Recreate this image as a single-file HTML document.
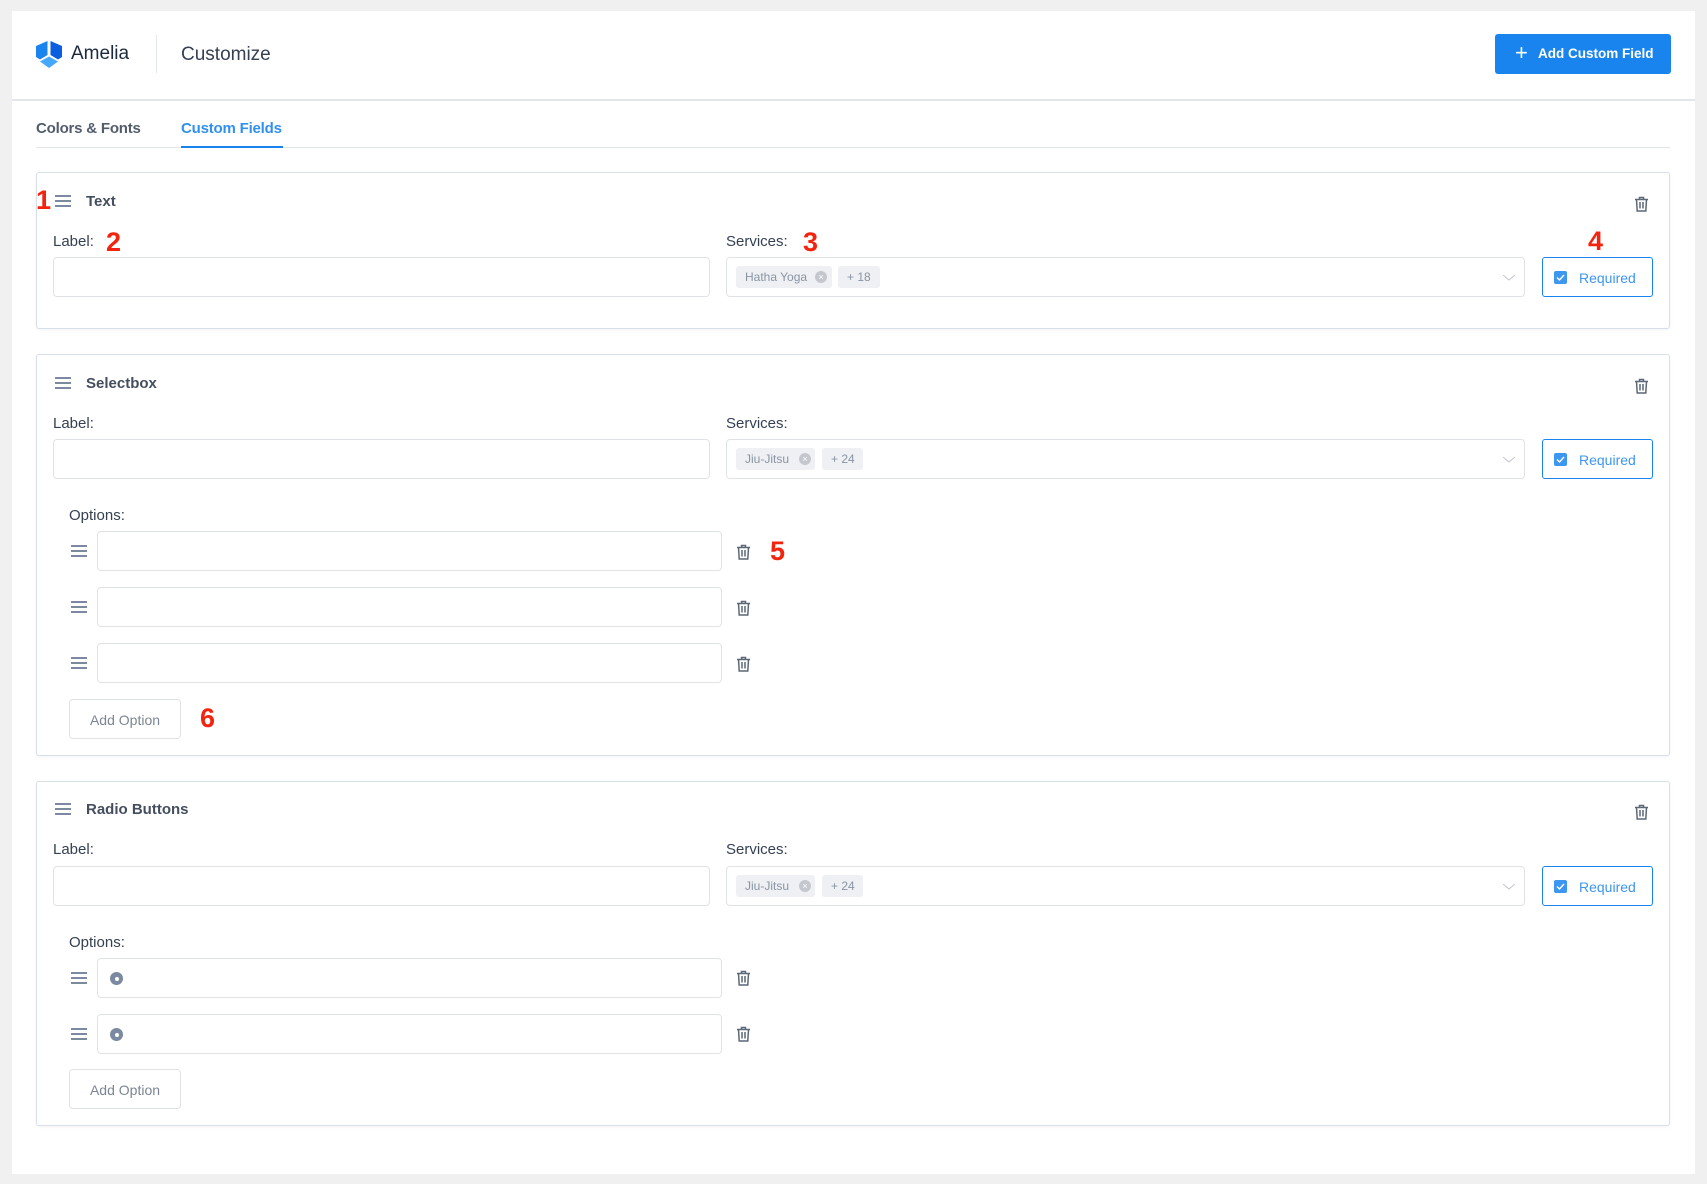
<!DOCTYPE html>
<html><head><meta charset="utf-8"><style>
*{box-sizing:border-box;margin:0;padding:0}
body{width:1707px;height:1184px;background:#f0f0f0;font-family:"Liberation Sans",Arial,sans-serif;position:relative;overflow:hidden;color:#354052}
.a{position:absolute}
.panel{left:12px;top:11px;width:1683px;height:1163px;background:#fff}
.hline{left:12px;top:99px;width:1683px;height:2px;background:#e2e6ea}
.card{position:absolute;left:36px;width:1634px;border:1px solid #d7dfe8;border-radius:3px;background:#fff;box-shadow:0 1px 3px rgba(0,0,0,.05)}
.inp{position:absolute;border:1px solid #dfe3e8;border-radius:4px;background:#fff}
.lbl{position:absolute;font-size:15px;color:#354052}
.title{position:absolute;font-size:15px;font-weight:bold;color:#354052;opacity:.92}
.req{position:absolute;left:1542px;width:111px;height:40px;border:1px solid #1a84ee;border-radius:3px;color:#3d96ef;font-size:14px}
.req .cb{position:absolute;left:11px;top:13px;width:13px;height:13px;background:#3d96ef;border-radius:2px}
.req span{position:absolute;left:36px;top:12px}
.tag{position:absolute;height:22px;background:#eef0f3;border-radius:3px;font-size:12px;color:#8a94a3;line-height:22px;padding-left:9px}
.x{position:absolute;top:5px;width:12px;height:12px;border-radius:50%;background:#c4c8ce;color:#fff;font-size:9px;line-height:12px;text-align:center}
.red{position:absolute;color:#f3240f;font-weight:bold;font-size:27px}
.addopt{position:absolute;left:69px;width:112px;height:40px;border:1px solid #dfe3e8;border-radius:4px;font-size:14px;color:#7b8594;text-align:center;line-height:40px}
.radio{position:absolute;left:12px;top:13px;width:13px;height:13px;border-radius:50%;background:#7b8aa0}
.radio:after{content:"";position:absolute;left:4.5px;top:4.5px;width:4px;height:4px;border-radius:50%;background:#fff}
</style></head><body>
<div class="a panel"></div>
<div class="a hline"></div>
<svg class="a" style="left:36px;top:41px" width="26" height="27" viewBox="0 0 26 27"><path d="M0 5 L11.5 0 L11.5 14 L4 18.5 L0 16Z" fill="#1a84ee"/><path d="M14.5 0 L26 5 L26 16 L22 18.5 L14.5 14Z" fill="#0a5fe0"/><path d="M13 15.5 L22 20.5 L13 27 L4 20.5Z" fill="#45a8ff"/></svg>
<div class="a" style="left:71px;top:43px;font-size:19px;color:#1b2a3d">Amelia</div>
<div class="a" style="left:156px;top:35px;width:1px;height:38px;background:#e2e6ea"></div>
<div class="a" style="left:181px;top:44px;font-size:19px;color:#354052">Customize</div>
<div class="a" style="left:1495px;top:34px;width:176px;height:40px;background:#1a84ee;border-radius:3px;color:#fff;font-size:14px;font-weight:bold;line-height:40px"><span style="position:absolute;left:20px;top:-1px;font-size:22px;font-weight:normal">+</span><span style="position:absolute;left:43px;font-size:13.5px">Add Custom Field</span></div>
<div class="a" style="left:36px;top:120px;font-size:15px;color:#354052;font-weight:bold;opacity:.85;letter-spacing:-.2px">Colors &amp; Fonts</div>
<div class="a" style="left:181px;top:120px;font-size:15px;color:#1a84ee;font-weight:bold;opacity:.9;letter-spacing:-.2px">Custom Fields</div>
<div class="a" style="left:36px;top:147px;width:1634px;height:1px;background:#e2e6ea"></div>
<div class="a" style="left:181px;top:146px;width:102px;height:2px;background:#1a84ee"></div>

<svg width="0" height="0" style="position:absolute"><defs>
<g id="ham"><rect x="0" y="0" width="16" height="2" fill="#7b8aa0"/><rect x="0" y="5" width="16" height="2" fill="#7b8aa0"/><rect x="0" y="10" width="16" height="2" fill="#7b8aa0"/></g>
<g id="tr" fill="none" stroke="#5c6778" stroke-width="1.5"><path d="M1 3.5H14M5.5 3.5V1.5H9.5V3.5M2.5 3.5L3.2 15H11.8L12.5 3.5M6 6V12.5M9 6V12.5"/></g>
<g id="chev"><path d="M0 0L6 5L12 0" fill="none" stroke="#c0c4cc" stroke-width="1"/></g>
<g id="chk"><path d="M3 6.5L5.5 9L10 4" fill="none" stroke="#fff" stroke-width="1.4"/></g>
</defs></svg>

<!-- card 1 -->
<div class="card" style="top:172px;height:157px"></div>
<svg class="a" style="left:55px;top:195px" width="16" height="12"><use href="#ham"/></svg>
<div class="title" style="left:86px;top:193px">Text</div>
<svg class="a" style="left:1634px;top:196px" width="15" height="16"><use href="#tr"/></svg>
<div class="lbl" style="left:53px;top:233px">Label:</div>
<div class="inp" style="left:53px;top:257px;width:657px;height:40px"></div>
<div class="lbl" style="left:726px;top:233px">Services:</div>
<div class="inp" style="left:726px;top:257px;width:799px;height:40px"></div>
<div class="tag" style="left:736px;top:266px;width:96px">Hatha Yoga<div class="x" style="left:79px">×</div></div>
<div class="tag" style="left:838px;top:266px;width:42px">+ 18</div>
<svg class="a" style="left:1503px;top:275px" width="12" height="6"><use href="#chev"/></svg>
<div class="req" style="top:257px"><div class="cb"><svg width="13" height="13"><use href="#chk"/></svg></div><span>Required</span></div>
<div class="red" style="left:36px;top:185px">1</div>
<div class="red" style="left:106px;top:227px">2</div>
<div class="red" style="left:803px;top:227px">3</div>
<div class="red" style="left:1588px;top:226px">4</div>

<!-- card 2 -->
<div class="card" style="top:354px;height:402px"></div>
<svg class="a" style="left:55px;top:377px" width="16" height="12"><use href="#ham"/></svg>
<div class="title" style="left:86px;top:375px">Selectbox</div>
<svg class="a" style="left:1634px;top:378px" width="15" height="16"><use href="#tr"/></svg>
<div class="lbl" style="left:53px;top:415px">Label:</div>
<div class="inp" style="left:53px;top:439px;width:657px;height:40px"></div>
<div class="lbl" style="left:726px;top:415px">Services:</div>
<div class="inp" style="left:726px;top:439px;width:799px;height:40px"></div>
<div class="tag" style="left:736px;top:448px;width:79px">Jiu-Jitsu<div class="x" style="left:63px">×</div></div>
<div class="tag" style="left:822px;top:448px;width:41px">+ 24</div>
<svg class="a" style="left:1503px;top:457px" width="12" height="6"><use href="#chev"/></svg>
<div class="req" style="top:439px"><div class="cb"><svg width="13" height="13"><use href="#chk"/></svg></div><span>Required</span></div>
<div class="lbl" style="left:69px;top:507px">Options:</div>
<svg class="a" style="left:71px;top:545px" width="16" height="12"><use href="#ham"/></svg>
<div class="inp" style="left:97px;top:531px;width:625px;height:40px"></div>
<svg class="a" style="left:736px;top:544px" width="15" height="16"><use href="#tr"/></svg>
<svg class="a" style="left:71px;top:601px" width="16" height="12"><use href="#ham"/></svg>
<div class="inp" style="left:97px;top:587px;width:625px;height:40px"></div>
<svg class="a" style="left:736px;top:600px" width="15" height="16"><use href="#tr"/></svg>
<svg class="a" style="left:71px;top:657px" width="16" height="12"><use href="#ham"/></svg>
<div class="inp" style="left:97px;top:643px;width:625px;height:40px"></div>
<svg class="a" style="left:736px;top:656px" width="15" height="16"><use href="#tr"/></svg>
<div class="addopt" style="top:699px">Add Option</div>
<div class="red" style="left:770px;top:536px">5</div>
<div class="red" style="left:200px;top:703px">6</div>

<!-- card 3 -->
<div class="card" style="top:781px;height:345px"></div>
<svg class="a" style="left:55px;top:803px" width="16" height="12"><use href="#ham"/></svg>
<div class="title" style="left:86px;top:801px">Radio Buttons</div>
<svg class="a" style="left:1634px;top:804px" width="15" height="16"><use href="#tr"/></svg>
<div class="lbl" style="left:53px;top:841px">Label:</div>
<div class="inp" style="left:53px;top:866px;width:657px;height:40px"></div>
<div class="lbl" style="left:726px;top:841px">Services:</div>
<div class="inp" style="left:726px;top:866px;width:799px;height:40px"></div>
<div class="tag" style="left:736px;top:875px;width:79px">Jiu-Jitsu<div class="x" style="left:63px">×</div></div>
<div class="tag" style="left:822px;top:875px;width:41px">+ 24</div>
<svg class="a" style="left:1503px;top:884px" width="12" height="6"><use href="#chev"/></svg>
<div class="req" style="top:866px"><div class="cb"><svg width="13" height="13"><use href="#chk"/></svg></div><span>Required</span></div>
<div class="lbl" style="left:69px;top:934px">Options:</div>
<svg class="a" style="left:71px;top:972px" width="16" height="12"><use href="#ham"/></svg>
<div class="inp" style="left:97px;top:958px;width:625px;height:40px"><div class="radio"></div></div>
<svg class="a" style="left:736px;top:970px" width="15" height="16"><use href="#tr"/></svg>
<svg class="a" style="left:71px;top:1028px" width="16" height="12"><use href="#ham"/></svg>
<div class="inp" style="left:97px;top:1014px;width:625px;height:40px"><div class="radio"></div></div>
<svg class="a" style="left:736px;top:1026px" width="15" height="16"><use href="#tr"/></svg>
<div class="addopt" style="top:1069px">Add Option</div>
</body></html>
